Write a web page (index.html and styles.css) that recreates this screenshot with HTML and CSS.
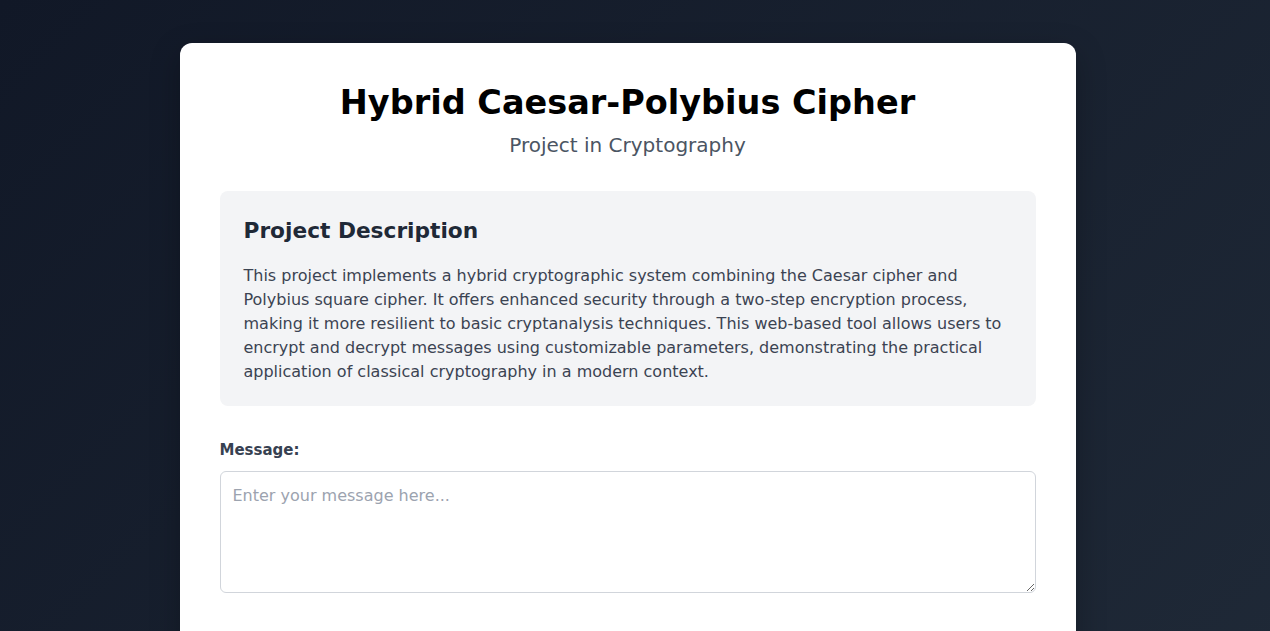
FILE: index.html
```html
<!DOCTYPE html>
<html lang="en">
<head>
<meta charset="utf-8">
<title>Hybrid Caesar-Polybius Cipher</title>
<link rel="stylesheet" href="styles.css">
</head>
<body>
<div class="page">
  <main class="card">
    <header class="header">
      <h1 class="title">Hybrid Caesar-Polybius Cipher</h1>
      <p class="subtitle">Project in Cryptography</p>
    </header>
    <section class="description">
      <h2 class="desc-title">Project Description</h2>
      <p class="desc-text">This project implements a hybrid cryptographic system combining the Caesar cipher and Polybius square cipher. It offers enhanced security through a two-step encryption process, making it more resilient to basic cryptanalysis techniques. This web-based tool allows users to encrypt and decrypt messages using customizable parameters, demonstrating the practical application of classical cryptography in a modern context.</p>
    </section>
    <div class="field">
      <label class="label" for="message">Message:</label>
      <textarea id="message" class="textarea" placeholder="Enter your message here..."></textarea>
    </div>
  </main>
</div>
</body>
</html>
```
FILE: styles.css
```css
html, body {
  margin: 0;
  padding: 0;
}
body {
  font-family: "DejaVu Sans", "Liberation Sans", sans-serif;
  background: linear-gradient(135deg, #111827 0%, #1f2937 100%);
  min-height: 100vh;
  color: #374151;
}
.page {
  padding: 43px 15px 40px 0;
}
.card {
  box-sizing: border-box;
  width: 896px;
  margin: 0 auto;
  background: #ffffff;
  border-radius: 12px;
  padding: 40px 40px 80px;
  box-shadow: 0 10px 30px rgba(0, 0, 0, 0.25);
}
.header {
  text-align: center;
}
.title {
  margin: 0;
  font-size: 33.5px;
  line-height: 40px;
  font-weight: 700;
  color: #000000;
}
.subtitle {
  margin: 8px 0 0;
  font-size: 20px;
  line-height: 28px;
  color: #4b5563;
}
.description {
  margin-top: 32px;
  background: #f3f4f6;
  border-radius: 8px;
  padding: 24px 24px 22px;
}
.desc-title {
  margin: 0;
  font-size: 21.7px;
  line-height: 32px;
  font-weight: 700;
  color: #1f2937;
}
.desc-text {
  margin: 17px 0 0;
  font-size: 16px;
  line-height: 24px;
  color: #3b4352;
}
.field {
  margin-top: 32px;
  display: flex;
  flex-direction: column;
  gap: 8px;
}
.label {
  font-size: 15px;
  line-height: 25px;
  font-weight: 700;
  color: #374151;
}
.textarea {
  box-sizing: border-box;
  width: 100%;
  height: 122px;
  padding: 12px;
  border: 1px solid #d1d5db;
  border-radius: 6px;
  font-family: "DejaVu Sans", "Liberation Sans", sans-serif;
  font-size: 16px;
  line-height: 24px;
  color: #1f2937;
  resize: vertical;
  outline: none;
}
.textarea::placeholder {
  color: #9ca3af;
}
```
